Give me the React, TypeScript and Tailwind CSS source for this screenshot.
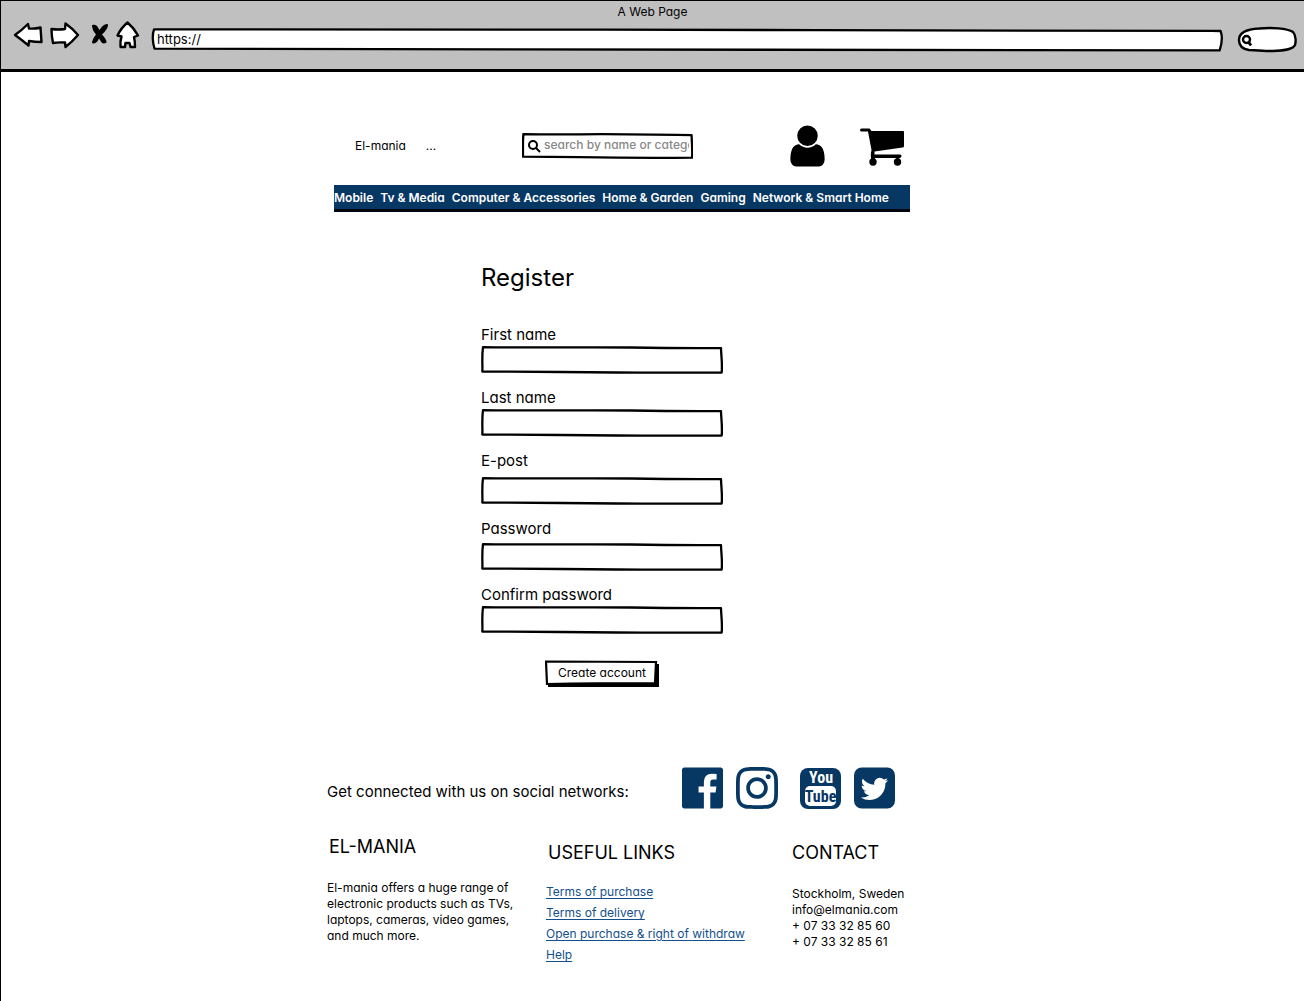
import { useId } from "react";
import type { ReactNode } from "react";
import { FaInstagram } from "react-icons/fa";

const frames = {
  field: "M2 1.2C60 2 100 .8 150 1.500S220 2 240 2.200C240.200 10 241.500 18 240.700 26.500C180 27 120 26.500 80 26S20 25.500 1.300 25.500C1.800 20 .6 12 2 1.200Z",
  wide: "M.7 1.500C60 2 100 1.500 150 2.500S220 3 241 3.500C241.500 10 241.300 18 240.800 26C180 26.500 120 25.500 80 25S20 24.500 .8 24C.4 18 .2 8 .7 1.500Z",
};

function SketchFrame({ shape = "field" }: { shape?: keyof typeof frames }) {
  return (
    <svg
      className="pointer-events-none absolute inset-0 h-full w-full"
      viewBox="0 0 242 28"
      preserveAspectRatio="none"
      fill="#fff"
      stroke="#000"
      strokeWidth="2.3"
      strokeLinejoin="round"
      aria-hidden="true"
    >
      <path vectorEffect="non-scaling-stroke" d={frames[shape]} />
    </svg>
  );
}

function Field({ label, type = "text", className }: { label: string; type?: string; className: string }) {
  const id = useId();
  return (
    <div className={`flex flex-col ${className}`}>
      <label htmlFor={id} className="text-[15px] leading-[23px]">
        {label}
      </label>
      <div className="relative h-7">
        <SketchFrame />
        <input id={id} type={type} className="relative h-full w-full bg-transparent px-2 text-[12px] outline-none" />
      </div>
    </div>
  );
}

function ToolButton({ label, className = "", children }: { label: string; className?: string; children: ReactNode }) {
  return (
    <button type="button" aria-label={label} className={`shrink-0 ${className}`}>
      {children}
    </button>
  );
}

function BrowserBar() {
  return (
    <header className="border-b-3 border-black bg-[#c0c0c0]">
      <p className="pt-[3px] text-center text-[12px] leading-4">A Web Page</p>
      <div className="flex h-[49px] items-start pl-3 pr-[7px]">
        <ToolButton label="Back">
          <svg width="30" height="30" viewBox="0 0 30 30" fill="#fff" stroke="#000" strokeWidth="2.4" strokeLinejoin="round">
            <path d="M2 15Q9 10 15 4L16 8.500Q22 9 27.500 7.500Q28 15 28.500 22Q22 22 16 21L15.500 25.500Q9 20 2 15Z" />
          </svg>
        </ToolButton>
        <ToolButton label="Forward" className="ml-[7px]">
          <svg width="30" height="30" viewBox="0 0 30 30" fill="#fff" stroke="#000" strokeWidth="2.4" strokeLinejoin="round">
            <path d="M1.500 9Q8 10 15 9L15.500 3.500Q22 8 28 15Q22 22 15.500 27L15 22.500Q8 22 3 23Q1.500 16 1.500 9Z" />
          </svg>
        </ToolButton>
        <ToolButton label="Stop" className="ml-2">
          <svg width="22" height="30" viewBox="0 0 22 30" aria-hidden="true">
            <path d="M4 5Q7 4 9 6L11.500 10Q14 6 16 5Q20 3 20 5Q20 9 14 14.500Q19 20 18.500 22.500Q16 24 14 23L11 18.500Q9 23 6 23.500Q4 24 4 22Q5 18 8 14.500Q4 10 4 5Z" />
          </svg>
        </ToolButton>
        <ToolButton label="Home" className="ml-[5px]">
          <svg width="26" height="30" viewBox="0 0 26 30" fill="#fff" stroke="#000" strokeWidth="2.4" strokeLinejoin="round">
            <path d="M12.500 2.500Q6 8 2.500 15.500L6.500 16.500Q5 21 5.500 27H10L10.500 23H14.500L15.500 27H20Q20 21 19 17L23 15.500Q19 8 12.500 2.500Z" />
          </svg>
        </ToolButton>
        <div className="relative ml-[10px] mt-2 h-6 flex-1">
          <SketchFrame shape="wide" />
          <input
            type="text"
            aria-label="Address"
            defaultValue="https://"
            className="relative block h-[22px] w-full bg-transparent px-1.5 text-[13px] outline-none"
          />
        </div>
        <label className="relative ml-3 mt-1.5 h-7 w-15">
          <svg className="absolute inset-0" width="60" height="28" viewBox="0 0 60 28" fill="#fff" stroke="#000" strokeWidth="2.4">
            <path d="M2 14C2 6 12 3 22 2.500C34 1.500 50 2 56 6C59 9 59 16 58 19C56 23 46 25 36 25C26 25 19 24 12 24C5 23 2 19 2 14Z" />
            <circle cx="9.500" cy="13.500" r="3.500" />
            <path d="M11.500 16L14 19.500" strokeWidth="3" />
          </svg>
          <input type="search" aria-label="Browser search" className="relative h-full w-full bg-transparent pl-5 pr-2 text-[12px] outline-none" />
        </label>
      </div>
    </header>
  );
}

function UserIcon() {
  return (
    <svg width="35" height="48" viewBox="0 0 1280 1792" aria-hidden="true">
      <path d="M1280 1399q0 109-62.500 187t-150.500 78h-854q-88 0-150.500-78t-62.500-187q0-85 8.500-160.500t31.500-152 58.500-131 94-89 134.500-34.500q131 128 313 128t313-128q76 0 134.500 34.500t94 89 58.500 131 31.500 152 8.500 160.500zm-256-887q0 159-112.500 271.500t-271.500 112.500-271.500-112.500-112.500-271.500 112.500-271.500 271.500-112.500 271.500 112.500 112.500 271.500z" />
    </svg>
  );
}

function CartIcon() {
  return (
    <svg width="46" height="40" viewBox="0 0 46 40" aria-hidden="true">
      <path d="M2.500 2.500H10.500L12.500 5H44Q45 5 45 6V20Q45 21.500 43.500 21.500L15.500 25.500V28.500H41Q42.500 28.500 42.500 30T41 32H12Q11.500 27 12.500 24L9 5.500H2.500Q1 5.500 1 4T2.500 2.500Z" />
      <circle cx="14" cy="36" r="3.700" />
      <circle cx="38.500" cy="36" r="3.700" />
      <path d="M12 30H16V36H12ZM37 30H40V36H37Z" />
    </svg>
  );
}

const categories = ["Mobile", "Tv & Media", "Computer & Accessories", "Home & Garden", "Gaming", "Network & Smart Home"];

function ShopHeader() {
  return (
    <div className="ml-[7px]">
      <div className="flex h-12 items-center">
        <a href="#home" className="ml-[21px] text-[12px]">
          El-mania
        </a>
        <span className="ml-5 text-[12px]">...</span>
        <div className="relative ml-auto h-[26px] w-[171px]">
          <SketchFrame />
          <svg className="absolute left-1.5 top-1.5" width="13" height="14" viewBox="0 0 13 14" fill="none" stroke="#000" strokeWidth="2">
            <circle cx="5" cy="6" r="4" />
            <path d="M8 9L12 13" />
          </svg>
          <input
            type="text"
            aria-label="Search"
            placeholder="search by name or category"
            className="relative block h-[23px] w-[167px] bg-transparent pl-[22px] text-[12px] font-medium outline-none placeholder:text-[#888]"
          />
        </div>
        <a href="#account" aria-label="Account" className="ml-[97px]">
          <UserIcon />
        </a>
        <a href="#cart" aria-label="Cart" className="ml-[34px] mr-[5px]">
          <CartIcon />
        </a>
      </div>
      <nav className="mt-[15px] flex h-[27px] items-center gap-[7px] whitespace-nowrap border-b-3 border-[#00060f] bg-[#073763] pt-0.5 text-[12px] font-semibold text-white">
        {categories.map((name) => (
          <a key={name} href="#category">
            {name}
          </a>
        ))}
      </nav>
    </div>
  );
}

function RegisterForm() {
  return (
    <form className="ml-[154px] mt-[50px] flex w-[242px] flex-col">
      <h1 className="text-[24px] leading-8">Register</h1>
      <Field label="First name" className="mt-[29px]" />
      <Field label="Last name" className="mt-3" />
      <Field label="E-post" type="email" className="mt-3 gap-[5px]" />
      <Field label="Password" type="password" className="mt-3 gap-[3px]" />
      <Field label="Confirm password" type="password" className="mt-3" />
      <button type="button" className="relative mt-[26px] h-[26px] w-[114px] self-center text-[12px]">
        <svg className="absolute inset-0" width="114" height="27" viewBox="0 0 114 27" aria-hidden="true">
          <path d="M3 4H114V27H3Z" />
          <path d="M1 1.500L111 2L110 23Q50 23 2 24Z" fill="#fff" stroke="#000" strokeWidth="2.200" />
        </svg>
        <span className="relative">Create account</span>
      </button>
    </form>
  );
}

function SocialLinks() {
  return (
    <div className="flex items-center text-[#073763]">
      <a href="#facebook" aria-label="Facebook">
        <svg width="41" height="48" viewBox="0 0 1536 1792" fill="currentColor">
          <path d="M1451 128q35 0 60 25t25 60v1366q0 35-25 60t-60 25h-391v-595h199l30-232h-229v-148q0-56 23.500-84t91.500-28l122-1v-207q-63-9-178-9-136 0-217.500 80t-81.500 226v171h-200v232h200v595h-735q-35 0-60-25t-25-60v-1366q0-35 25-60t60-25h1366z" />
        </svg>
      </a>
      <a href="#instagram" aria-label="Instagram" className="ml-2.5">
        <FaInstagram size={48} />
      </a>
      <a href="#youtube" aria-label="YouTube" className="ml-[19px]">
        <svg width="41" height="41" viewBox="0 0 41 41" fontFamily="'Roboto Condensed', Roboto, sans-serif" fontWeight="700" textAnchor="middle">
          <rect width="41" height="41" rx="8" fill="currentColor" />
          <text x="21" y="15" fontSize="16" fill="#fff">You</text>
          <rect x="5" y="18" width="31" height="20" rx="5" fill="#fff" />
          <text x="20.500" y="34" fontSize="16" fill="currentColor">Tube</text>
        </svg>
      </a>
      <a href="#twitter" aria-label="Twitter" className="ml-[13px]">
        <svg width="41" height="48" viewBox="0 0 1536 1792" fill="currentColor">
          <path d="M1280 610q-56 25-121 34 68-40 93-117-65 38-134 51-61-66-153-66-87 0-148.500 61.500t-61.500 148.500q0 29 5 48-129-7-242-65t-192-155q-29 50-29 106 0 114 91 175-47-1-100-26v2q0 75 50 133.500t123 72.500q-29 8-51 8-13 0-39-4 21 63 74.500 104t121.500 42q-116 90-261 90-26 0-50-3 148 94 322 94 112 0 210-35.500t168-95 120.500-137 75-162 24.500-168.500q0-18-1-27 63-45 105-109zm256-194v960q0 119-84.500 203.500t-203.500 84.500h-960q-119 0-203.500-84.500t-84.500-203.500v-960q0-119 84.500-203.500t203.500-84.500h960q119 0 203.500 84.500t84.500 203.500z" />
        </svg>
      </a>
    </div>
  );
}

const links = ["Terms of purchase", "Terms of delivery", "Open purchase & right of withdraw", "Help"];

function Footer() {
  return (
    <footer className="mt-[78px]">
      <div className="flex items-center">
        <p className="w-[355px] pt-2 text-[15px]">Get connected with us on social networks:</p>
        <SocialLinks />
      </div>
      <div className="mt-[23px] flex items-start">
        <section className="w-[219px]">
          <h2 className="ml-[2px] text-[18px] leading-6">EL-MANIA</h2>
          <p className="mt-[21px] w-[200px] text-[12px] leading-4">
            El-mania offers a huge range of electronic products such as TVs, laptops, cameras, video games, and much more.
          </p>
        </section>
        <section className="mt-1.5 w-[246px]">
          <h2 className="ml-[2px] text-[18px] leading-6">USEFUL LINKS</h2>
          <ul className="mt-4 text-[12px] leading-[21px] text-[#134f8c]">
            {links.map((name) => (
              <li key={name}>
                <a href="#info" className="underline underline-offset-2">
                  {name}
                </a>
              </li>
            ))}
          </ul>
        </section>
        <section className="mt-1.5">
          <h2 className="text-[18px] leading-6">CONTACT</h2>
          <address className="mt-[21px] whitespace-nowrap text-[12px] leading-4 not-italic">
            Stockholm, Sweden
            <br />
            info@elmania.com
            <br />
            + 07 33 32 85 60
            <br />
            + 07 33 32 85 61
          </address>
        </section>
      </div>
    </footer>
  );
}

export default function App() {
  return (
    <div className="min-h-screen border-l border-t border-black bg-white font-['Inter','Noto_Sans',sans-serif] text-black [font-feature-settings:'cv11']">
      <BrowserBar />
      <div className="pr-[68px] pt-[50px]">
        <main className="mx-auto w-full max-w-[583px]">
          <ShopHeader />
          <RegisterForm />
          <Footer />
        </main>
      </div>
    </div>
  );
}
